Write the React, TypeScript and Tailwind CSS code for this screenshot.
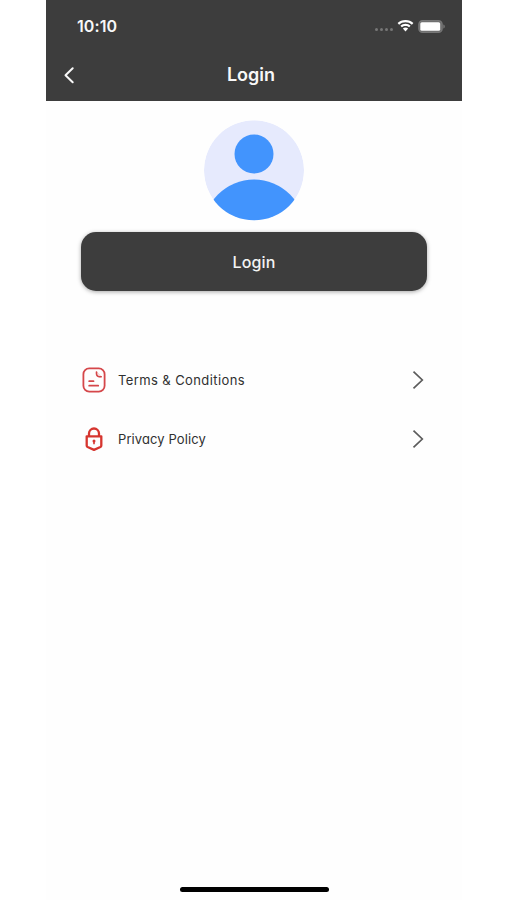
import React from "react";

function StatusBar() {
  return (
    <div className="flex h-[50px] items-center justify-between pl-[31px] pr-[17px] pt-[2px]">
      <span className="text-[16px] leading-5 font-semibold tracking-[0.1px]">10:10</span>
      <div className="flex items-center">
        <div className="mt-[7px] mr-[4px] flex gap-[2px]">
          {[0, 1, 2, 3].map((dot) => (
            <span key={dot} className="h-[3px] w-[3px] rounded-full bg-[#777777]" />
          ))}
        </div>
        <svg width="17" height="12" viewBox="0 0 17 12" className="mr-[4px]" fill="white">
          <path d="M8.5 0C5.3 0 2.6 1.1.6 3.1l1.5 1.6C3.8 3 6 2.2 8.500 2.200S13.200 3 14.900 4.700l1.500-1.600C14.400 1.100 11.700 0 8.500 0Z" />
          <path d="M8.500 3.700c-2 0-3.800.7-5.100 2l1.500 1.600c1-.9 2.200-1.400 3.600-1.400s2.600.5 3.600 1.400l1.500-1.600c-1.300-1.300-3.100-2-5.100-2Z" />
          <path d="M8.500 7.400c-1 0-1.900.4-2.600 1.100l2.600 2.900 2.600-2.900c-.7-.7-1.600-1.100-2.600-1.100Z" />
        </svg>
        <svg width="27" height="13" viewBox="0 0 27 13">
          <rect x="0.900" y="0.700" width="23.200" height="11.600" rx="3.600" fill="#6a6a6a" stroke="#777777" strokeWidth="1.400" />
          <rect x="2.300" y="2.200" width="19.900" height="8.600" rx="1.600" fill="white" />
          <path d="M25.300 4.500v4c1-.4 1.500-1.100 1.500-2s-.5-1.600-1.500-2Z" fill="#777777" />
        </svg>
      </div>
    </div>
  );
}

function TermsIcon() {
  return (
    <svg width="24" height="26" viewBox="0 0 24 26" fill="none" stroke="#d5474a" strokeWidth="1.800" strokeLinecap="round" strokeLinejoin="round">
      <rect x="1.400" y="1.400" width="21.200" height="23.200" rx="5.800" />
      <path d="M14.500 5v1.800a3 3 0 0 0 3 3h1.700M14.800 5.200l4.200 4.300" strokeWidth="1" strokeOpacity="0.350" />
      <path d="M14.500 5v1.800a3 3 0 0 0 3 3h1.700" strokeWidth="1.600" />
      <path d="M7.200 14.200h4.300M7.200 18.700h9" />
    </svg>
  );
}

function LockIcon() {
  return (
    <svg width="24" height="26" viewBox="0 0 24 26" fill="none" stroke="#d6352f" strokeWidth="2.300" strokeLinejoin="round">
      <path d="M7 10V7.500a5 5 0 0 1 10 0V10" />
      <path d="M4.700 10.300h14.600v9.200q0 1-.9 1.500L12 23.900l-6.400-2.900q-.9-.5-.9-1.500Z" />
      <circle cx="12" cy="14.900" r="1.500" fill="#d6352f" stroke="none" />
      <path d="M12 15v3.300" strokeWidth="1.600" />
    </svg>
  );
}

function MenuRow({ icon, children, className }: { icon: React.ReactNode; children: string; className: string }) {
  return (
    <button className="flex h-[59.500px] w-full items-center pl-[1px] pr-[3px] text-left">
      {icon}
      <span className={`ml-[12px] text-[13px] leading-5 text-[#303030] ${className}`}>{children}</span>
      <svg className="ml-auto" width="12" height="20" viewBox="0 0 12 20" fill="none" stroke="#5c5c5c" strokeWidth="1.700">
        <path d="m1.500 1.600 8.800 8.400-8.800 8.400" />
      </svg>
    </button>
  );
}

export default function App() {
  return (
    <div className="h-[900px] bg-white font-['Inter','Liberation_Sans',sans-serif] [font-feature-settings:'cv11'_1]">
      <main className="ml-[46px] flex h-full w-[416px] flex-col bg-[#fefefe]">
        <header className="h-[101px] shrink-0 bg-[#3d3d3d] text-[#f8f8f8]">
          <StatusBar />
          <div className="grid h-[50px] grid-cols-[60px_1fr_60px] items-center pr-[6px]">
            <button aria-label="Back" className="pl-[17px]">
              <svg width="12" height="18" viewBox="0 0 12 18" fill="none" stroke="currentColor" strokeWidth="2" strokeLinecap="round" strokeLinejoin="round">
                <path d="M9.700 2.200 2.500 9.200l7.200 7" />
              </svg>
            </button>
            <h1 className="text-center text-[18px] leading-6 font-semibold">Login</h1>
          </div>
        </header>

        <div className="flex justify-center pt-[19px]">
          <svg width="100" height="101" viewBox="0 0 100 101">
            <clipPath id="avatar">
              <circle cx="50" cy="50.300" r="50" />
            </clipPath>
            <g clipPath="url(#avatar)">
              <circle cx="50" cy="50.300" r="50" fill="#e6eafd" />
              <circle cx="50" cy="34" r="19.500" fill="#4294fd" />
              <circle cx="50" cy="110.500" r="51" fill="#4294fd" />
            </g>
          </svg>
        </div>

        <div className="pl-[35px] pr-[35px] pt-[11px]">
          <button className="h-[59px] w-full rounded-[15px] bg-[#3d3d3d] text-[16px] leading-6 font-medium tracking-[0.1px] text-[#f3f3f3] shadow-[0_1px_4px_rgba(0,0,0,0.35)]">
            Login
          </button>
        </div>

        <nav className="pl-[35px] pr-[35px] pt-[59px]">
          <MenuRow icon={<TermsIcon />} className="tracking-[0.4px]">Terms &amp; Conditions</MenuRow>
          <MenuRow icon={<LockIcon />} className="tracking-[0.1px]">Privacy Policy</MenuRow>
        </nav>

        <div className="mt-auto flex justify-center pb-[8px]">
          <div className="h-[5px] w-[149px] rounded-full bg-black" />
        </div>
      </main>
    </div>
  );
}
